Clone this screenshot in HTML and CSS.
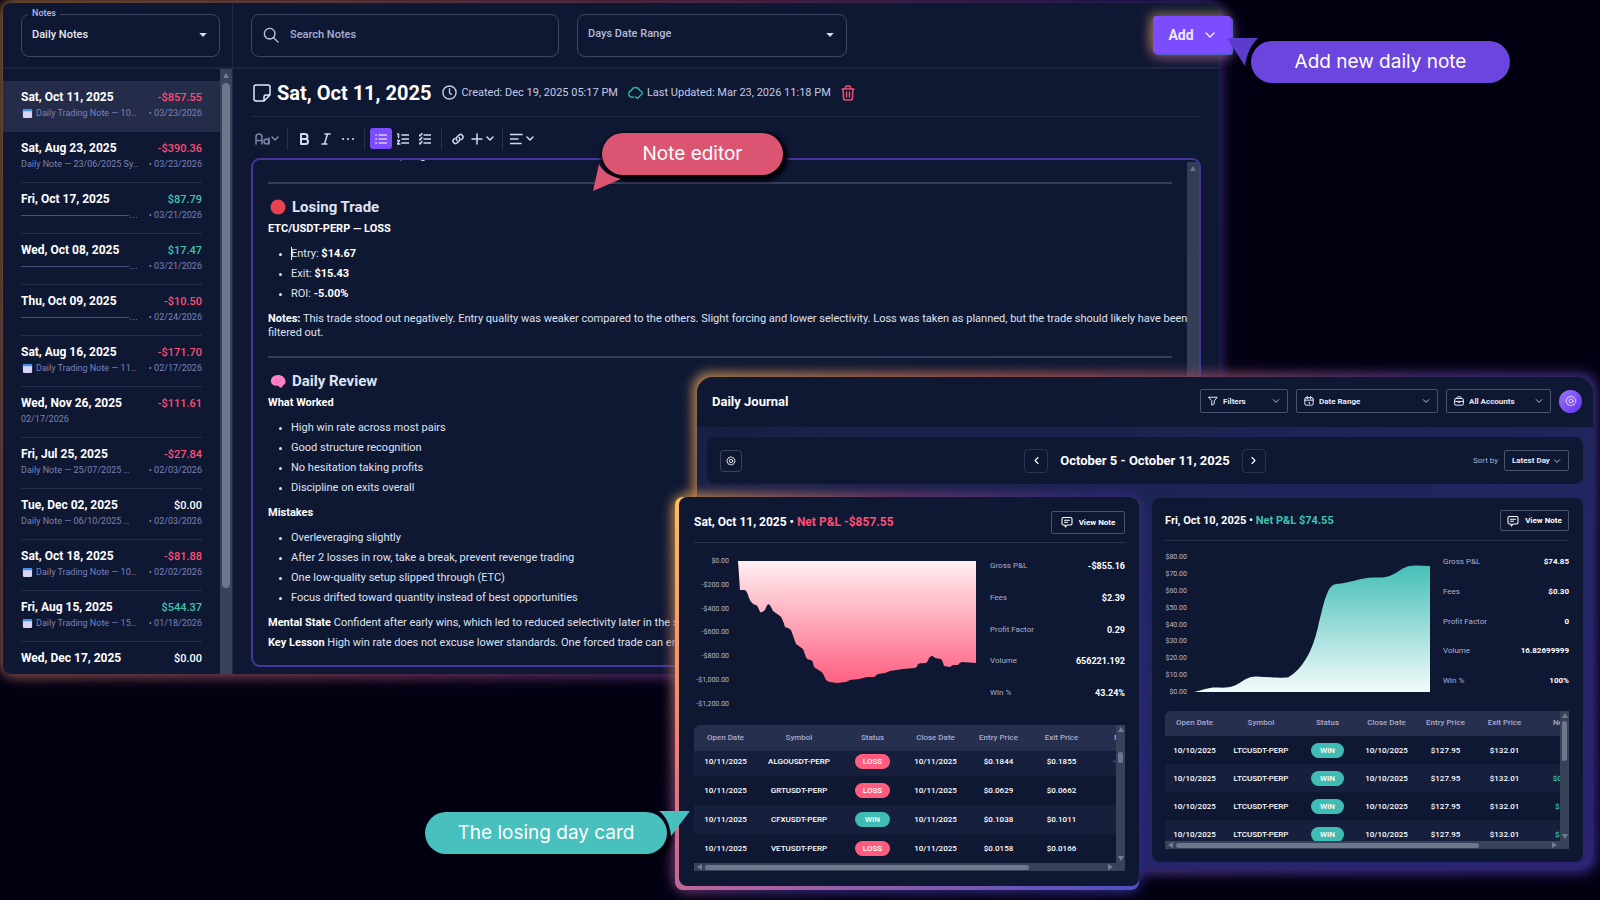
FILE: index.html
```html
<!DOCTYPE html>
<html lang="en">
<head>
    <meta charset="UTF-8">
    <meta name="viewport" content="width=device-width, initial-scale=1.0">
    <title>Daily Notes</title>
    <link rel="stylesheet" href="styles.css">
</head>
<body>
    <svg class="sprite" aria-hidden="true">
        <symbol id="i-down" viewBox="0 0 12 12"><path d="M2 4l4 4 4-4"/></symbol>
        <symbol id="i-caret" viewBox="0 0 12 12"><path d="M1.500 3.500h9L6 8.500z" fill="currentColor" stroke="none"/></symbol>
        <symbol id="i-gear" viewBox="0 0 24 24"><path d="M12 2l2.800 2 3.400.2 1 3.200L21.800 9.500 21 12l.8 2.500-2.600 2.100-1 3.200-3.400.2L12 22l-2.800-2-3.400-.2-1-3.200L2.200 14.500 3 12l-.8-2.500 2.600-2.100 1-3.200L9.200 4z"/><circle cx="12" cy="12" r="4"/></symbol>
        <symbol id="i-note" viewBox="0 0 24 24"><path d="M5 3h14a3 3 0 0 1 3 3v9a3 3 0 0 1-3 3h-7l-3 4-1-4H5a3 3 0 0 1-3-3V6a3 3 0 0 1 3-3zM7 8.500h10M7 12.500h6"/></symbol>
        <symbol id="i-cal" viewBox="0 0 12 12"><rect x="1" y="1" width="10" height="10" rx="1.500" fill="#d9d3f5" stroke="none"/><path d="M1 3.500V2.500A1.500 1.500 0 0 1 2.500 1h7A1.500 1.500 0 0 1 11 2.500v1z" fill="#3f8ff0" stroke="none"/></symbol>
    </svg>

    <section class="window notes">
        <div class="window-body notes-body">
            <aside class="sidebar">
                <div class="sidebar-head">
                    <div class="field field-notes">
                        <label class="float-label" for="note-type">Notes</label>
                        <select id="note-type"><option>Daily Notes</option></select>
                        <svg class="icon arrow"><use href="#i-caret"/></svg>
                    </div>
                </div>
                <div class="list-wrap">
                    <ul class="note-list">
                        <li class="active">
                            <div class="row"><b>Sat, Oct 11, 2025</b><span class="amount loss">-$857.55</span></div>
                            <div class="row sub"><svg class="cal"><use href="#i-cal"/></svg><span class="preview">Daily Trading Note — 10…</span><time>• 03/23/2026</time></div>
                        </li>
                        <li>
                            <div class="row"><b>Sat, Aug 23, 2025</b><span class="amount loss">-$390.36</span></div>
                            <div class="row sub"><span class="preview">Daily Note — 23/06/2025 Sy…</span><time>• 03/23/2026</time></div>
                        </li>
                        <li>
                            <div class="row"><b>Fri, Oct 17, 2025</b><span class="amount win">$87.79</span></div>
                            <div class="row sub"><span class="preview dashes">————————————…</span><time>• 03/21/2026</time></div>
                        </li>
                        <li>
                            <div class="row"><b>Wed, Oct 08, 2025</b><span class="amount win">$17.47</span></div>
                            <div class="row sub"><span class="preview dashes">————————————…</span><time>• 03/21/2026</time></div>
                        </li>
                        <li>
                            <div class="row"><b>Thu, Oct 09, 2025</b><span class="amount loss">-$10.50</span></div>
                            <div class="row sub"><span class="preview dashes">————————————…</span><time>• 02/24/2026</time></div>
                        </li>
                        <li>
                            <div class="row"><b>Sat, Aug 16, 2025</b><span class="amount loss">-$171.70</span></div>
                            <div class="row sub"><svg class="cal"><use href="#i-cal"/></svg><span class="preview">Daily Trading Note — 11…</span><time>• 02/17/2026</time></div>
                        </li>
                        <li>
                            <div class="row"><b>Wed, Nov 26, 2025</b><span class="amount loss">-$111.61</span></div>
                            <div class="row sub"><time>02/17/2026</time></div>
                        </li>
                        <li>
                            <div class="row"><b>Fri, Jul 25, 2025</b><span class="amount loss">-$27.84</span></div>
                            <div class="row sub"><span class="preview">Daily Note — 25/07/2025 …</span><time>• 02/03/2026</time></div>
                        </li>
                        <li>
                            <div class="row"><b>Tue, Dec 02, 2025</b><span class="amount">$0.00</span></div>
                            <div class="row sub"><span class="preview">Daily Note — 06/10/2025 …</span><time>• 02/03/2026</time></div>
                        </li>
                        <li>
                            <div class="row"><b>Sat, Oct 18, 2025</b><span class="amount loss">-$81.88</span></div>
                            <div class="row sub"><svg class="cal"><use href="#i-cal"/></svg><span class="preview">Daily Trading Note — 10…</span><time>• 02/02/2026</time></div>
                        </li>
                        <li>
                            <div class="row"><b>Fri, Aug 15, 2025</b><span class="amount win">$544.37</span></div>
                            <div class="row sub"><svg class="cal"><use href="#i-cal"/></svg><span class="preview">Daily Trading Note — 15…</span><time>• 01/18/2026</time></div>
                        </li>
                        <li>
                            <div class="row"><b>Wed, Dec 17, 2025</b><span class="amount">$0.00</span></div>
                        </li>
                    </ul>
                    <div class="vbar list-bar"><i class="tri up"></i><i class="thumb"></i></div>
                </div>
            </aside>

            <main class="content">
                <div class="content-head">
                    <label class="field search">
                        <svg class="icon search-icon" viewBox="0 0 18 18"><circle cx="7.500" cy="7.500" r="6"/><path d="M12 12l5 5"/></svg>
                        <input type="text" placeholder="Search Notes" aria-label="Search Notes">
                    </label>
                    <div class="field range">
                        <select aria-label="Days Date Range"><option>Days Date Range</option></select>
                        <svg class="icon arrow"><use href="#i-caret"/></svg>
                    </div>
                    <button class="add-btn">Add <svg class="icon"><use href="#i-down"/></svg></button>
                </div>

                <div class="note-head">
                    <svg class="icon note-icon" viewBox="0 0 18 18"><path d="M3 1h12a2 2 0 0 1 2 2v8l-6 6H3a2 2 0 0 1-2-2V3a2 2 0 0 1 2-2zM17 11h-4a2 2 0 0 0-2 2v4"/></svg>
                    <h1>Sat, Oct 11, 2025</h1>
                    <svg class="icon meta-icon" viewBox="0 0 16 16"><circle cx="8" cy="8" r="7"/><path d="M8 4v4.500l2 1.500"/></svg>
                    <span>Created: Dec 19, 2025 05:17 PM</span>
                    <svg class="icon meta-icon cloud" viewBox="0 0 16 16"><path d="M6 13H4a3.500 3.500 0 0 1-.5-6.900 4.700 4.700 0 0 1 9-.3 3.500 3.500 0 0 1 2.500 4M8 12.500l2 2 4-4"/></svg>
                    <span>Last Updated: Mar 23, 2026 11:18 PM</span>
                    <button class="trash" aria-label="Delete note"><svg class="icon" viewBox="0 0 14 16"><path d="M1 4h12M4.500 4V2.500a1.500 1.500 0 0 1 1.500-1.500h2a1.500 1.500 0 0 1 1.500 1.500V4M2 4l.5 9a2 2 0 0 0 2 2h5a2 2 0 0 0 2-2L12 4M5.500 7v5M8.500 7v5"/></svg></button>
                </div>

                <div class="toolbar">
                    <button class="dim" aria-label="Text style"><svg class="icon" viewBox="0 0 24 12"><path d="M1 11V4a3 3 0 0 1 6 0v7M1 7.500h6M14 5v6"/><circle cx="11.500" cy="8.500" r="2.500"/><path d="M17 4l3 3 3-3"/></svg></button>
                    <i class="sep"></i>
                    <button aria-label="Bold"><svg class="icon bold" viewBox="0 0 12 12"><path d="M3 1h4a2.500 2.500 0 0 1 0 5H3zM3 6h4.500a2.500 2.500 0 0 1 0 5H3z"/></svg></button>
                    <button aria-label="Italic"><svg class="icon" viewBox="0 0 12 12"><path d="M5 1h5M2 11h5M7.500 1l-3 10"/></svg></button>
                    <button aria-label="More"><svg class="icon dots" viewBox="0 0 12 12"><path d="M1 6h.1M6 6h.1M11 6h.1"/></svg></button>
                    <i class="sep"></i>
                    <button class="on" aria-label="Bullet list"><svg class="icon" viewBox="0 0 12 12"><path d="M4 2h8M4 6h8M4 10h8M.8 2h.6M.8 6h.6M.8 10h.6"/></svg></button>
                    <button aria-label="Numbered list"><svg class="icon" viewBox="0 0 12 12"><path d="M5 2h7M5 6h7M5 10h7M.5 1h1v3.500M0 7.500h2.500L.5 11H3"/></svg></button>
                    <button aria-label="Check list"><svg class="icon" viewBox="0 0 12 12"><path d="M5 2h7M5 6h7M5 10h7M0 2l1 1 2-2.500M0 6l1 1 2-2.500M0 10l1 1 2-2.500"/></svg></button>
                    <i class="sep"></i>
                    <button aria-label="Link"><svg class="icon" viewBox="0 0 12 12"><path d="M5 7.500a2.500 2.500 0 0 1 0-3.500l2-2a2.500 2.500 0 0 1 3.500 3.500L9.500 6.500M7 4.500A2.500 2.500 0 0 1 7 8l-2 2A2.500 2.500 0 0 1 1.500 6.500L2.500 5.500"/></svg></button>
                    <button class="wide" aria-label="Insert"><svg class="icon" viewBox="0 0 24 12"><path d="M1 6h10M6 1v10M16 4l3 3 3-3"/></svg></button>
                    <i class="sep"></i>
                    <button class="wide" aria-label="Align"><svg class="icon" viewBox="0 0 24 12"><path d="M0 1.500h12M0 6h8M0 10.500h11M17 4l3 3 3-3"/></svg></button>
                </div>

                <div class="editor">
                    <article class="editor-text">
                        <p class="cut">Solid execution and no fear, long</p>
                        <hr>
                        <h2><svg class="emoji" viewBox="0 0 16 16"><circle cx="8" cy="8" r="7.500" fill="#e8414f"/></svg>Losing Trade</h2>
                        <p><b>ETC/USDT-PERP — LOSS</b></p>
                        <ul>
                            <li class="caret">Entry: <b>$14.67</b></li>
                            <li>Exit: <b>$15.43</b></li>
                            <li>ROI: <b>-5.00%</b></li>
                        </ul>
                        <p class="long"><b>Notes:</b> This trade stood out negatively. Entry quality was weaker compared to the others. Slight forcing and lower selectivity. Loss was taken as planned, but the trade should likely have been filtered out.</p>
                        <hr>
                        <h2><svg class="emoji" viewBox="0 0 16 16"><path d="M1 9c-.5-4 2.500-7 7-7 4 0 7 2.500 7.500 6 .3 3-1.500 4-2.500 4 0 2-1.500 2.500-2.500 2.500S8.500 13 8 12.500C5 13.500 1.500 12 1 9z" fill="#ff82c8"/><path d="M4 8c1-2 3-1 3-3M8 9c2 0 2-2 4-2M6 11c1 0 2-.5 2-2" fill="none" stroke="#f56cba"/></svg>Daily Review</h2>
                        <p><b>What Worked</b></p>
                        <ul>
                            <li>High win rate across most pairs</li>
                            <li>Good structure recognition</li>
                            <li>No hesitation taking profits</li>
                            <li>Discipline on exits overall</li>
                        </ul>
                        <p><b>Mistakes</b></p>
                        <ul>
                            <li>Overleveraging slightly</li>
                            <li>After 2 losses in row, take a break, prevent revenge trading</li>
                            <li>One low-quality setup slipped through (ETC)</li>
                            <li>Focus drifted toward quantity instead of best opportunities</li>
                        </ul>
                        <p><b>Mental State</b> Confident after early wins, which led to reduced selectivity later in the session.</p>
                        <p><b>Key Lesson</b> High win rate does not excuse lower standards. One forced trade can erase several wins.</p>
                    </article>
                    <div class="vbar editor-bar"><i class="tri up"></i></div>
                </div>
            </main>
        </div>
    </section>

    <section class="window journal">
        <div class="window-body journal-body">
            <header class="journal-head">
                <h2>Daily Journal</h2>
                <button class="pick filters"><svg class="icon" viewBox="0 0 12 12"><path d="M1 1.500h10L7.500 6v3.500L4.500 11V6z"/></svg><span>Filters</span><svg class="icon chev"><use href="#i-down"/></svg></button>
                <button class="pick dates"><svg class="icon" viewBox="0 0 12 12"><rect x="1" y="2" width="10" height="9" rx="1.500"/><path d="M1 5h10M4 .5v3M8 .5v3M6 7.500h.5v1.500"/></svg><span>Date Range</span><svg class="icon chev"><use href="#i-down"/></svg></button>
                <label class="pick accounts"><svg class="icon" viewBox="0 0 12 12"><rect x=".7" y="3" width="10.600" height="8" rx="1.500"/><path d="M3.500 3V2a1 1 0 0 1 1-1h3a1 1 0 0 1 1 1v1M1 6.500h10M5 7.500h2"/></svg><select aria-label="Accounts"><option>All Accounts</option></select><svg class="icon chev"><use href="#i-down"/></svg></label>
                <button class="round" aria-label="Settings"><svg class="icon"><use href="#i-gear"/></svg></button>
            </header>

            <div class="journal-bar">
                <button class="square" aria-label="Card settings"><svg class="icon"><use href="#i-gear"/></svg></button>
                <div class="week">
                    <button class="square nav" aria-label="Previous week"><svg class="icon" viewBox="0 0 12 12"><path d="M8 2L4 6l4 4"/></svg></button>
                    <h3>October 5 - October 11, 2025</h3>
                    <button class="square nav" aria-label="Next week"><svg class="icon" viewBox="0 0 12 12"><path d="M4 2l4 4-4 4"/></svg></button>
                </div>
                <div class="sort">
                    <label for="sort">Sort by</label>
                    <div class="pick latest"><select id="sort"><option>Latest Day</option></select><svg class="icon chev"><use href="#i-down"/></svg></div>
                </div>
            </div>

            <div class="cards">
                <div class="window losing">
                    <div class="losing-frame">
                        <article class="card big">
                            <header class="card-head">
                                <h4>Sat, Oct 11, 2025 • <span class="loss">Net P&amp;L -$857.55</span></h4>
                                <button class="view"><svg class="icon"><use href="#i-note"/></svg>View Note</button>
                            </header>
                            <div class="chart-row">
                                <div class="axis"><span>$0.00</span><span>-$200.00</span><span>-$400.00</span><span>-$600.00</span><span>-$800.00</span><span>-$1,000.00</span><span>-$1,200.00</span></div>
                                <svg class="plot" viewBox="0 0 238 143" preserveAspectRatio="none">
                                    <defs><linearGradient id="g-loss" x1="0" y1="0" x2="0" y2="1"><stop offset="0" stop-color="#fff0f2"/><stop offset="1" stop-color="#ff5f80"/></linearGradient></defs>
                                    <path fill="url(#g-loss)" d="M0 0H238V102L224 101Q222 101 220 104H215L212 106 206 105Q204 98 203 98L197 97Q194 93 191 97 190 101 188 102 182 102 180 103 179 107 176 107L165 108 152 110 147 112 140 113 136 116H129L121 118 112 119 108 121 99 122 92 121Q88 120 87 117 85 111 82 110L76 106Q75 100 73 99 69 99 68 96L65 88 58 83 53 69Q51 67 47 66 44 56 42 55L35 50Q32 43 30 43 28 46 27 49 24 52 22 51 20 45 18 44 14 44 11 37 9 30 7 29H2Z"/>
                                </svg>
                                <dl class="stats">
                                    <div><dt>Gross P&amp;L</dt><dd>-$855.16</dd></div>
                                    <div><dt>Fees</dt><dd>$2.39</dd></div>
                                    <div><dt>Profit Factor</dt><dd>0.29</dd></div>
                                    <div><dt>Volume</dt><dd>656221.192</dd></div>
                                    <div><dt>Win %</dt><dd>43.24%</dd></div>
                                </dl>
                            </div>
                            <div class="grid-box">
                                <div class="scroller" id="loss-scroll">
                                    <table>
                                        <thead><tr><th>Open Date</th><th class="sym">Symbol</th><th>Status</th><th>Close Date</th><th>Entry Price</th><th>Exit Price</th><th>Net P&amp;L</th></tr></thead>
                                        <tbody>
                                            <tr><td>10/11/2025</td><td>ALGOUSDT-PERP</td><td><span class="pill bad">LOSS</span></td><td>10/11/2025</td><td>$0.1844</td><td>$0.1855</td><td class="loss">-$10.848</td></tr>
                                            <tr><td>10/11/2025</td><td>GRTUSDT-PERP</td><td><span class="pill bad">LOSS</span></td><td>10/11/2025</td><td>$0.0629</td><td>$0.0662</td><td class="loss">-$9</td></tr>
                                            <tr><td>10/11/2025</td><td>CFXUSDT-PERP</td><td><span class="pill good">WIN</span></td><td>10/11/2025</td><td>$0.1038</td><td>$0.1011</td><td class="win">$4</td></tr>
                                            <tr><td>10/11/2025</td><td>VETUSDT-PERP</td><td><span class="pill bad">LOSS</span></td><td>10/11/2025</td><td>$0.0158</td><td>$0.0166</td><td class="loss">-$8</td></tr>
                                        </tbody>
                                    </table>
                                </div>
                                <div class="vbar"><i class="tri up"></i><i class="thumb"></i><i class="tri down"></i></div>
                                <div class="hbar"><i class="tri left"></i><i class="thumb"></i><i class="tri right"></i></div>
                            </div>
                        </article>
                    </div>
                </div>

                <article class="card small">
                    <header class="card-head">
                        <h4>Fri, Oct 10, 2025 • <span class="win">Net P&amp;L $74.55</span></h4>
                        <button class="view"><svg class="icon"><use href="#i-note"/></svg>View Note</button>
                    </header>
                    <div class="chart-row">
                        <div class="axis"><span>$80.00</span><span>$70.00</span><span>$60.00</span><span>$50.00</span><span>$40.00</span><span>$30.00</span><span>$20.00</span><span>$10.00</span><span>$0.00</span></div>
                        <svg class="plot" viewBox="0 0 236 135" preserveAspectRatio="none">
                            <defs><linearGradient id="g-win" x1="0" y1="0" x2="0" y2="1"><stop offset="0" stop-color="#45bfb8"/><stop offset="1" stop-color="#f3fbfb"/></linearGradient></defs>
                            <path fill="url(#g-win)" d="M0 135C10 133 14 130 24 130.500C48 132 46 120 62 119.500C74 120 86 121 94 120.500C108 112 118 96 124 70C130 46 133 28 142 27C158 26 166 20 182 20.500C204 22 204 8 222 8.500L236 9V135Z"/>
                        </svg>
                        <dl class="stats">
                            <div><dt>Gross P&amp;L</dt><dd>$74.85</dd></div>
                            <div><dt>Fees</dt><dd>$0.30</dd></div>
                            <div><dt>Profit Factor</dt><dd>0</dd></div>
                            <div><dt>Volume</dt><dd>16.82699999</dd></div>
                            <div><dt>Win %</dt><dd>100%</dd></div>
                        </dl>
                    </div>
                    <div class="grid-box">
                        <div class="scroller">
                            <table>
                                <thead><tr><th>Open Date</th><th class="sym">Symbol</th><th>Status</th><th>Close Date</th><th>Entry Price</th><th>Exit Price</th><th>Net P&amp;L</th></tr></thead>
                                <tbody>
                                    <tr><td>10/10/2025</td><td>LTCUSDT-PERP</td><td><span class="pill good">WIN</span></td><td>10/10/2025</td><td>$127.95</td><td>$132.01</td><td class="win">$3.6</td></tr>
                                    <tr><td>10/10/2025</td><td>LTCUSDT-PERP</td><td><span class="pill good">WIN</span></td><td>10/10/2025</td><td>$127.95</td><td>$132.01</td><td class="win">$0.8121</td></tr>
                                    <tr><td>10/10/2025</td><td>LTCUSDT-PERP</td><td><span class="pill good">WIN</span></td><td>10/10/2025</td><td>$127.95</td><td>$132.01</td><td class="win">$12.18</td></tr>
                                    <tr><td>10/10/2025</td><td>LTCUSDT-PERP</td><td><span class="pill good">WIN</span></td><td>10/10/2025</td><td>$127.95</td><td>$132.01</td><td class="win">$31.06</td></tr>
                                </tbody>
                            </table>
                        </div>
                        <div class="vbar"><i class="tri up"></i><i class="thumb"></i><i class="tri down"></i></div>
                        <div class="hbar"><i class="tri left"></i><i class="thumb"></i><i class="tri right"></i></div>
                    </div>
                </article>
            </div>
        </div>
    </section>

    <!-- callouts -->
    <div class="callout c-add"><svg class="pointer" viewBox="0 0 32 28"><path d="M0 0H31C24 7 20 15 18 28z"/></svg>Add new daily note</div>
    <div class="callout c-editor"><svg class="pointer" viewBox="0 0 28 28"><path d="M6 0C10 8 17 12 28 15L0 27z"/></svg>Note editor</div>
    <div class="callout c-losing"><svg class="pointer" viewBox="0 0 32 26"><path d="M0 0H31L12 25C11 14 7 5 0 0z"/></svg>The losing day card</div>

    <script>
        // header stays in place, rows start slightly scrolled
        document.getElementById('loss-scroll').scrollTop = 4;
    </script>
</body>
</html>
```
FILE: styles.css
```css
* {
    box-sizing: border-box;
}

body {
    margin: 0;
    min-height: 100vh;
    position: relative;
    overflow: hidden;
    background: #020112;
    color: #fff;
    font-family: Roboto, sans-serif;
    font-size: 11px;
}

h1, h2, h3, h4, p, ul, dl, dd {
    margin: 0;
    padding: 0;
}

ul {
    list-style: none;
}

button, select, input {
    font: inherit;
    color: inherit;
    background: none;
    border: 0;
    padding: 0;
    appearance: none;
    outline: none;
}

.sprite {
    position: absolute;
    width: 0;
    height: 0;
}

.icon {
    width: 12px;
    height: 12px;
    flex: none;
    fill: none;
    stroke: currentColor;
    stroke-width: 1.5;
    stroke-linecap: round;
    stroke-linejoin: round;
}

.loss {
    color: #ff4d73;
}

.win {
    color: #3fc4b0;
}

/* windows */
.window {
    isolation: isolate;
}

.window::before {
    content: "";
    position: absolute;
    inset: -4px;
    z-index: -1;
    border-radius: 16px;
    filter: blur(6px);
}

.notes {
    position: absolute;
    left: 3px;
    top: 3px;
    width: 76%;
}

.notes::before {
    background: linear-gradient(115deg, #b07a44, #8a4068 45%, #3c2a80 75%, #30266a);
    opacity: 0.8;
}

.window-body {
    background: #0f1833;
    border-radius: 8px;
}

.notes-body {
    display: grid;
    grid-template-columns: 230px 1fr;
}

.sidebar {
    display: flex;
    flex-direction: column;
    border-right: 1px solid #1f2945;
}

.sidebar-head,
.content-head {
    height: 66px;
    padding: 11px 12px 0 18px;
    border-bottom: 2px solid #1c2642;
}

.field {
    display: flex;
    align-items: center;
    position: relative;
    height: 43px;
    padding: 0 11px 2px 10px;
    border: 1px solid #3d4762;
    border-radius: 8px;
    font-weight: 500;
    color: #b4bcdc;
}

.field select,
.field input {
    flex: 1;
    min-width: 0;
}

.field input::placeholder {
    color: #a9b2d4;
    opacity: 1;
}

.field-notes {
    color: #e6e8f4;
}

.float-label {
    position: absolute;
    top: -8px;
    left: 6px;
    padding: 0 4px;
    background: #0f1833;
    font-size: 9px;
    line-height: 12px;
    color: #b9b6e8;
}

.field .arrow {
    width: 10px;
    height: 10px;
    color: #d5daf0;
}

.list-wrap {
    flex: 1;
    display: flex;
    contain: size;
    overflow: hidden;
}

.note-list {
    flex: 1;
    min-width: 0;
    padding-top: 12px;
}

.note-list li {
    height: 51px;
    margin: 0 18px;
    padding-top: 8px;
    border-bottom: 1px solid #242e4a;
}

.note-list li.active {
    margin: 0;
    padding: 8px 18px 0;
    background: #242c4a;
    border-color: #242c4a;
}

.row {
    display: flex;
    justify-content: space-between;
    align-items: center;
    height: 16px;
    font-size: 12px;
    white-space: nowrap;
}

.row b {
    font-weight: 700;
}

.amount {
    font-size: 11px;
    font-weight: 500;
}

.row.sub {
    font-size: 9px;
    color: #7a82b8;
}

.cal {
    width: 11px;
    height: 11px;
    margin: 0 3px 0 1px;
    flex: none;
}

.preview {
    flex: 1;
}

.dashes {
    font-family: "Liberation Sans", Arial, sans-serif;
}

/* drawn scrollbars */
.vbar, .hbar {
    display: flex;
    align-items: center;
    background: #38435a;
}

.vbar {
    flex-direction: column;
    width: 12px;
}

.thumb {
    border-radius: 4px;
    background: #6c778c;
}

.tri {
    border: 3px solid transparent;
    flex: none;
}

.tri.up { border-bottom: 5px solid #737e92; border-top: 0; }
.tri.down { border-top: 5px solid #737e92; border-bottom: 0; }
.tri.left { border-right: 5px solid #737e92; border-left: 0; }
.tri.right { border-left: 5px solid #737e92; border-right: 0; }

.list-bar {
    padding-top: 4px;
}

.list-bar .thumb {
    width: 8px;
    height: 84%;
    margin-top: 5px;
}

.content {
    display: flex;
    flex-direction: column;
    min-width: 0;
    padding-bottom: 7px;
}

.content-head {
    display: flex;
    gap: 18px;
}

.search {
    width: 308px;
    padding-left: 11px;
}

.search-icon {
    width: 16px;
    height: 16px;
    margin-right: 11px;
    color: #c3c9e4;
}

.range {
    width: 270px;
}

.range select {
    padding-bottom: 2px;
}

.add-btn {
    display: flex;
    align-items: center;
    justify-content: center;
    gap: 10px;
    position: relative;
    width: 78px;
    height: 37px;
    margin: 2px -24px 0 auto;
    border-radius: 3px;
    background: #7c4dff;
    font-size: 14px;
    font-weight: 700;
    color: #efe9ff;
    box-shadow: 2px 2px 0 #5560c8, -3px -3px 12px #b8954a90, -2px 5px 12px #d0605a70, 3px 4px 14px #5a4fc080;
}

.note-head {
    display: flex;
    align-items: center;
    height: 48px;
    margin: 0 18px;
    padding-left: 2px;
    border-bottom: 1px solid #1f2945;
    color: #c4cbe6;
}

.note-head h1 {
    margin: 0 11px 0 6px;
    font-size: 20px;
    font-weight: 700;
    color: #fff;
}

.note-icon {
    width: 18px;
    height: 18px;
    color: #e4e8f6;
}

.meta-icon {
    width: 15px;
    height: 15px;
    margin-right: 4px;
}

.cloud {
    margin-left: 10px;
    color: #2fae98;
}

.trash {
    display: flex;
    margin-left: 10px;
    color: #f0506e;
}

.trash .icon {
    width: 14px;
    height: 16px;
}

.toolbar {
    display: flex;
    align-items: center;
    height: 41px;
    padding: 2px 18px 0 22px;
    color: #d3d9ee;
}

.toolbar button {
    display: flex;
    align-items: center;
    justify-content: center;
    width: 22px;
    height: 21px;
    border-radius: 3px;
}

.toolbar .dim {
    width: 27px;
    justify-content: flex-start;
    color: #7c86a6;
}

.toolbar .dim .icon,
.toolbar .wide .icon {
    width: 24px;
}

.toolbar .wide {
    width: 28px;
}

.toolbar .on {
    background: #7c4dff;
    color: #d9ccff;
}

.bold {
    stroke-width: 2;
}

.dots {
    stroke-width: 2;
}

.sep {
    width: 1px;
    height: 22px;
    margin: 0 5px;
    background: #26304c;
}

.editor {
    display: flex;
    margin: 0 18px;
    border: 2px solid #46359c;
    border-radius: 9px;
    overflow: hidden;
}

.editor-text {
    flex: 1;
    min-width: 0;
    padding: 0 15px 9px;
    line-height: 14px;
    color: #dfe3f2;
}

.editor-text b {
    color: #fff;
}

.editor-text p {
    margin-bottom: 6px;
}

.editor-text .cut {
    margin: -11px 0 19px;
}

.editor-text .long {
    position: relative;
    z-index: 1;
    margin-right: -19px;
}

.editor-text hr {
    height: 2px;
    margin: 16px 0 13px;
    border: 0;
    background: #353f5a;
}

.editor-text h2 {
    display: flex;
    align-items: center;
    gap: 6px;
    height: 20px;
    padding-left: 2px;
    margin-bottom: 5px;
    font-size: 15px;
}

.emoji {
    width: 16px;
    height: 16px;
}

.editor-text ul {
    margin: 11px 0 11px 23px;
    list-style: disc;
}

.editor-text li {
    margin-bottom: 6px;
}

.editor-text li::marker {
    font-size: 9px;
}

.caret::before {
    content: "";
    position: absolute;
    width: 1px;
    height: 13px;
    background: #fff;
}

.editor-bar {
    margin-top: 2px;
    padding-top: 4px;
    opacity: 0.9;
}

/* journal */
.journal {
    position: absolute;
    right: 7px;
    top: 377px;
    width: 56%;
}

.journal::before {
    background: linear-gradient(125deg, #c08a50, #a05050 30%, #45307a 60%, #30247e);
}

.journal-body {
    border-radius: 16px;
    background: linear-gradient(160deg, #151f40, #20265e 50%, #2b2472);
}

.journal-head {
    display: flex;
    align-items: center;
    gap: 8px;
    height: 50px;
    padding: 0 11px 2px 15px;
    border-radius: 16px 16px 0 0;
    background: #0f1833;
}

.journal-head h2 {
    margin-right: auto;
    font-size: 13px;
    font-weight: 700;
}

.pick {
    display: flex;
    align-items: center;
    gap: 5px;
    height: 24px;
    padding: 0 7px;
    border: 1px solid #4a536e;
    border-radius: 2px;
    font-size: 8px;
    font-weight: 700;
    color: #e4e7f5;
}

.pick span,
.pick select {
    flex: 1;
    min-width: 0;
    text-align: left;
}

.pick .icon {
    width: 10px;
    height: 10px;
    stroke-width: 1.2;
}

.pick .chev {
    width: 8px;
    height: 8px;
}

.filters { width: 88px; }
.dates { width: 142px; }
.accounts { width: 105px; }

.round {
    display: flex;
    align-items: center;
    justify-content: center;
    width: 23px;
    height: 23px;
    border-radius: 50%;
    background: linear-gradient(135deg, #9d78ff, #5f2eea);
}

.journal-bar {
    display: flex;
    align-items: center;
    justify-content: space-between;
    height: 47px;
    margin: 10px 10px 13px;
    padding: 0 14px 0 13px;
    border-radius: 8px;
    background: #0f1833;
}

.square {
    display: flex;
    align-items: center;
    justify-content: center;
    width: 22px;
    height: 22px;
    border: 1px solid #3a4460;
    border-radius: 4px;
}

.square .icon {
    width: 10px;
    height: 10px;
    stroke-width: 2;
}

.week {
    display: flex;
    align-items: center;
    gap: 12px;
}

.week .nav {
    width: 24px;
    height: 24px;
    border-color: #2a3450;
}

.week .nav .icon {
    width: 9px;
    height: 9px;
    stroke-width: 1.5;
}

.week h3 {
    font-size: 13px;
    font-weight: 700;
}

/* equal sides keep the week centred */
.journal-bar > .square {
    margin-right: 75px;
}

.sort {
    display: flex;
    align-items: center;
    gap: 6px;
    font-size: 8px;
    color: #aab0d2;
}

.latest {
    width: 65px;
    height: 21px;
    gap: 0;
}

.cards {
    display: grid;
    grid-template-columns: 1fr 1fr;
    align-items: start;
    gap: 14px;
    padding: 0 10px 8px;
}

.card {
    background: #0f1833;
    border-radius: 8px;
}

.losing {
    position: relative;
    margin: 0 -1px -28px -32px;
}

.losing::before {
    inset: -3px;
    background: linear-gradient(125deg, #c88f45, #7a3a68 30%, #35297a 55%, #2b2880);
}

.losing-frame {
    padding: 0 0 4px 4px;
    border-radius: 8px;
    background: linear-gradient(150deg, #ffbe5c, #ee8070 38%, #b8649c 62%, #4d4fc4);
}

.big {
    padding: 0 14px 15px 15px;
}

.small {
    margin-top: 1px;
    padding: 0 14px 13px 13px;
}

.card-head {
    display: flex;
    align-items: center;
    justify-content: space-between;
    height: 46px;
    padding-top: 5px;
    border-bottom: 1px solid #2b3552;
}

.small .card-head {
    height: 43px;
    padding-top: 3px;
}

.card-head h4 {
    font-size: 12px;
    font-weight: 700;
}

.small .card-head h4 {
    font-size: 11px;
}

.view {
    display: flex;
    align-items: center;
    justify-content: center;
    gap: 6px;
    width: 74px;
    height: 23px;
    border: 1px solid #4a536e;
    border-radius: 2px;
    font-size: 8px;
    font-weight: 700;
}

.view .icon {
    stroke-width: 2.2;
}

.small .view {
    width: 69px;
    height: 21px;
}

.chart-row {
    display: grid;
    grid-template-columns: 35px 1fr 135px;
    height: 182px;
    padding: 12px 0 15px;
}

.small .chart-row {
    grid-template-columns: 22px 1fr 126px;
    height: 170px;
    padding: 10px 0 13px;
}

.axis {
    display: flex;
    flex-direction: column;
    justify-content: space-between;
    text-align: right;
    font-size: 7px;
    line-height: 12px;
    white-space: nowrap;
    color: #b6bbd8;
}

.plot {
    width: calc(100% - 23px);
    height: calc(100% - 12px);
    margin: 6px 14px 6px 9px;
}

.small .plot {
    width: calc(100% - 20px);
    margin: 6px 13px 6px 7px;
}

.stats {
    display: flex;
    flex-direction: column;
    justify-content: space-between;
    padding: 4px 0 10px;
    font-size: 9px;
    line-height: 14px;
}

.small .stats {
    font-size: 8px;
}

.stats div {
    display: flex;
    justify-content: space-between;
}

.stats dt {
    font-size: 8px;
    color: #aab0d2;
}

.stats dd {
    font-weight: 700;
}

/* trades table */
.grid-box {
    display: grid;
    grid-template-columns: 1fr 9px;
    border-radius: 6px 0 0 0;
    overflow: hidden;
}

.scroller {
    height: 138px;
    overflow: hidden;
}

.small .scroller {
    height: 130px;
}

table {
    width: 470px;
    table-layout: fixed;
    border-collapse: separate;
    border-spacing: 0;
    text-align: center;
    font-size: 8px;
    font-weight: 500;
}

.small table {
    width: 436px;
}

th, td {
    height: 29px;
    padding: 0;
}

.small td {
    height: 28px;
}

th {
    position: sticky;
    top: 0;
    width: 63px;
    height: 26px;
    padding-bottom: 2px;
    font-weight: 500;
    color: #a7acd0;
}

.small th {
    width: 59px;
    height: 25px;
}

th.sym {
    width: 84px;
}

.small th.sym {
    width: 74px;
}

th:last-child,
.small th:last-child {
    width: auto;
}

.big tr:nth-child(odd) td,
.small tr:nth-child(even) td {
    background: #161f3b;
}

.big th,
.small th {
    background: #272f4e;
}

.pill {
    display: block;
    width: 35px;
    height: 15px;
    margin: 0 auto;
    border-radius: 8px;
    line-height: 15px;
}

.small .pill {
    width: 33px;
}

.bad { background: #ff5c80; }
.good { background: #3fbdb5; }

.grid-box .vbar {
    width: 9px;
    padding: 2px 0;
}

.grid-box .vbar .thumb {
    width: 5px;
    height: 11px;
    margin: 20px 0 auto;
}

.small .grid-box .vbar .thumb {
    height: 40px;
    margin-top: 3px;
}

.hbar {
    grid-column: 1 / -1;
    height: 8px;
    padding: 0 12px 0 3px;
}

.hbar .thumb {
    width: 78%;
    height: 5px;
    margin: 0 auto 0 3px;
}

/* callouts */
.callout {
    position: absolute;
    height: 42px;
    border-radius: 21px;
    font-family: Inter, sans-serif;
    font-size: 19px;
    line-height: 42px;
    text-align: center;
    white-space: nowrap;
    box-shadow: 2px 3px 4px 3px #01010c;
}

.pointer {
    position: absolute;
}

.c-add {
    left: 1251px;
    top: 41px;
    width: 259px;
    background: #6b45dd;
    fill: #5c3cc8;
}

.c-add .pointer {
    left: -24px;
    top: -3px;
    width: 32px;
    height: 28px;
}

.c-editor {
    left: 602px;
    top: 133px;
    width: 181px;
    background: #db5573;
    fill: #db5573;
}

.c-editor .pointer {
    left: -9px;
    bottom: -17px;
    width: 28px;
    height: 28px;
}

.c-losing {
    left: 425px;
    top: 812px;
    width: 242px;
    background: #48c0bd;
    fill: #48c0bd;
}

.c-losing .pointer {
    right: -24px;
    top: -1px;
    width: 32px;
    height: 26px;
}
```
